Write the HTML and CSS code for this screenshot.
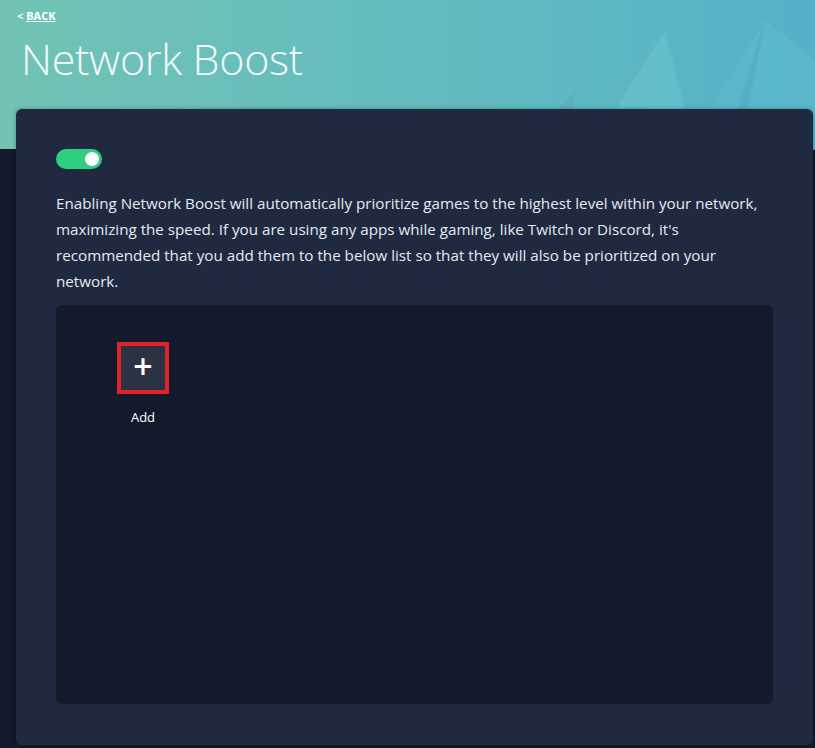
FILE: index.html
```html
<!DOCTYPE html>
<html lang="en">
<head>
	<meta charset="UTF-8">
	<title>Network Boost</title>
	<link rel="stylesheet" href="styles.css">
</head>
<body>
	<div class="header">
		<svg class="shapes" width="420" height="150" viewBox="0 0 420 150">
			<polygon points="150,150 270,30 230,150" fill="#5fb6c3" opacity="0.8"/>
			<polygon points="195,150 270,30 300,150" fill="#66c0cc" opacity="0.7"/>
			<polygon points="290,150 370,20 420,60 420,150" fill="#5cb8cc" opacity="0.8"/>
			<polygon points="330,150 370,20 345,150" fill="#4fa8bd" opacity="0.5"/>
			<polygon points="130,150 180,90 175,150" fill="#57aebc" opacity="0.5"/>
		</svg>
		<a class="back" href="#">&lt; <u>BACK</u></a>
		<h1>Network Boost</h1>
	</div>
	<div class="card">
		<div class="toggle"><span class="knob"></span></div>
		<p class="desc">Enabling Network Boost will automatically prioritize games to the highest level within your network, maximizing the speed. If you are using any apps while gaming, like Twitch or Discord, it's recommended that you add them to the below list so that they will also be prioritized on your network.</p>
		<div class="panel">
			<div class="add">
				<div class="addbox">+</div>
				<div class="addlabel">Add</div>
			</div>
		</div>
	</div>
</body>
</html>
```
FILE: styles.css
```css
*{
	margin: 0;
	padding: 0;
	box-sizing: border-box;
}
body{
	background-color: #121a2b;
	font-family: "Open Sans", "Noto Sans", sans-serif;
	color: #e8ecf2;
	width: 815px;
	height: 748px;
	overflow: hidden;
}
.header{
	height: 149px;
	background: linear-gradient(90deg, #72c3b4 0%, #64bcbf 50%, #56b1c9 100%);
	position: relative;
	padding: 8px 0 0 17px;
}
.shapes{
	position: absolute;
	right: 0;
	top: 0;
}
.back{
	position: relative;
	display: block;
	color: #fff;
	text-decoration: none;
	font-size: 11px;
	font-weight: 700;
	line-height: 16px;
}
.header h1{
	position: relative;
	font-family: "Open Sans", sans-serif;
	font-weight: 300;
	font-size: 43px;
	color: #f2fbfa;
	margin: 5px 0 0 4px;
	line-height: 60px;
	letter-spacing: -0.3px;
}
.card{
	position: relative;
	margin: -40px 2px 0 16px;
	height: 636px;
	background-color: #1f2940;
	border-radius: 6px;
	padding: 40px 40px 40px 40px;
	box-shadow: 0 0 4px rgba(0,0,0,0.3);
}
.toggle{
	width: 46px;
	height: 20px;
	border-radius: 10px;
	background-color: #2fce83;
	position: relative;
}
.knob{
	position: absolute;
	right: 3px;
	top: 3px;
	width: 14px;
	height: 14px;
	border-radius: 50%;
	background-color: #fff;
}
.desc{
	margin-top: 21px;
	font-size: 15.2px;
	line-height: 26px;
	color: #e6eaf1;
	width: 706px;
}
.panel{
	margin-top: 11px;
	height: 399px;
	background-color: #121a2c;
	border-radius: 6px;
	padding: 37px 0 0 61px;
}
.add{
	width: 52px;
	display: flex;
	flex-direction: column;
	align-items: center;
}
.addbox{
	width: 52px;
	height: 52px;
	border: 4px solid #e3212b;
	background-color: #2a3244;
	color: #fff;
	font-size: 34px;
	font-weight: 600;
	line-height: 40px;
	text-align: center;
}
.addlabel{
	margin-top: 14px;
	font-size: 13px;
	color: #fff;
}
```
